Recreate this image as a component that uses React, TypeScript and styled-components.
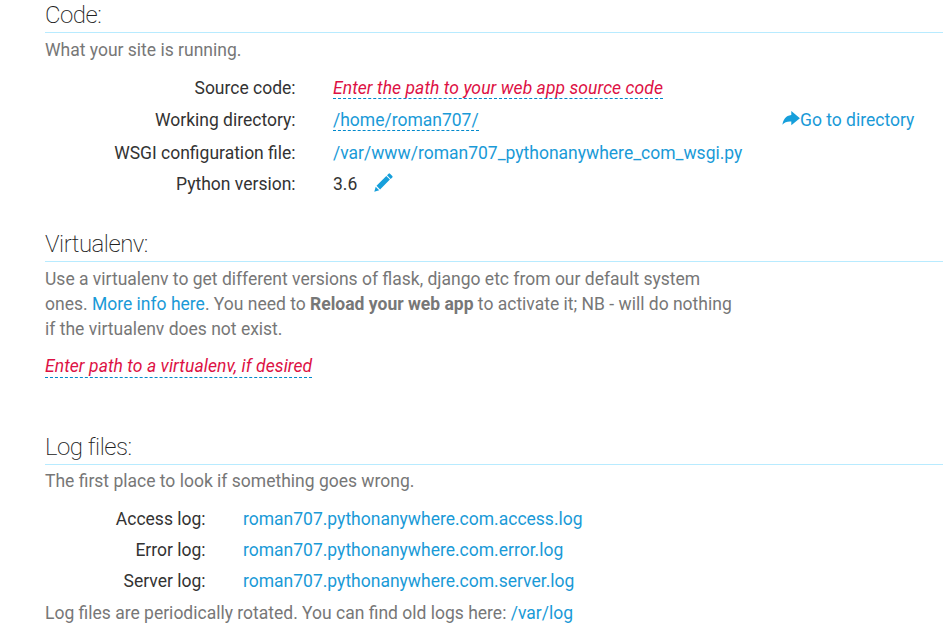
import React from "react";
import styled, { createGlobalStyle } from "styled-components";

const Global = createGlobalStyle`
  * { box-sizing: border-box; }
  body { margin: 0; background: #fff; overflow: hidden; }
`;

const Page = styled.main`
  height: 644px;
  overflow: hidden;
  padding-left: 45px;
  font-family: Roboto, sans-serif;
  font-size: 17.5px;
  line-height: 25px;
  color: #777;
`;

const Section = styled.section<{ $height: number }>`
  height: ${(p) => p.$height}px;
  margin-right: 3px;
`;

const Heading = styled.h2<{ $height: number }>`
  display: flex;
  align-items: flex-end;
  height: ${(p) => p.$height}px;
  margin: 0;
  padding-bottom: 3px;
  border-bottom: 1px solid #b8ebff;
  font-size: 24px;
  line-height: 28px;
  font-weight: 200;
  letter-spacing: -0.5px;
  color: #222;
`;

const Text = styled.p<{ $top?: number }>`
  margin: ${(p) => p.$top ?? 0}px 0 0;
  white-space: nowrap;
`;

const Row = styled.div<{ $label: number; $height: number }>`
  display: grid;
  grid-template-columns: ${(p) => p.$label}px 449px auto;
  column-gap: 37.4px;
  justify-content: start;
  height: ${(p) => p.$height}px;
  white-space: nowrap;
`;

const Rows = styled.div`
  padding-top: 13px;
`;

const Label = styled.span`
  text-align: right;
  color: #333;
`;

const Value = styled.span`
  color: #333;
`;

const Link = styled.a`
  color: #1a9ad7;
  text-decoration: none;
`;

const Editable = styled(Link)<{ $empty?: boolean; $line?: number }>`
  display: inline-block;
  line-height: ${(p) => p.$line ?? 19}px;
  border-bottom: 1px dashed #0088cc;
  ${(p) => p.$empty && "color: #dd1144; font-style: italic; letter-spacing: 0.07px;"}
`;

const Directory = styled(Link)`
  margin-left: -37.4px;
`;

const ArrowIcon = styled.svg`
  display: inline-block;
  vertical-align: -1px;
`;

const Arrow = () => (
  <ArrowIcon width="18" height="16" viewBox="0 0 18 16" fill="#169fdb">
    <path d="M9.300 0L17.900 7.200L9.300 14.200V10.600C5 10.300 2.700 11.500 0.400 13.800C1.100 8.700 3.700 4.500 9.300 3.900Z" />
  </ArrowIcon>
);

const Pencil = () => (
  <svg width="19" height="19" viewBox="0 0 19 19" fill="#169fdb">
    <path d="M0.300 18.700L1.700 13.700L5.200 17.200ZM2.500 12.700L12.300 3L15.900 6.600L6.100 16.400ZM13 2.300L14.600.700Q15.300 0 16 .700L18.300 3Q19 3.700 18.300 4.400L16.700 6Z" />
  </svg>
);

const EditIcon = styled.span`
  display: inline-flex;
  margin-left: 17px;
  vertical-align: -2px;
`;

const logs = ["Access", "Error", "Server"];

export default function App() {
  return (
    <>
      <Global />
      <Page>
        <Section $height={228}>
          <Heading $height={33}>Code:</Heading>
          <Text $top={5}>What your site is running.</Text>
          <Rows>
            <Row $label={250.6} $height={32}>
              <Label>Source code:</Label>
              <Value><Editable $empty>Enter the path to your web app source code</Editable></Value>
            </Row>
            <Row $label={250.6} $height={33}>
              <Label>Working directory:</Label>
              <Value><Editable>/home/roman707/</Editable></Value>
              <Directory><Arrow />Go to directory</Directory>
            </Row>
            <Row $label={250.6} $height={31}>
              <Label>WSGI configuration file:</Label>
              <Value><Link>/var/www/roman707_pythonanywhere_com_wsgi.py</Link></Value>
            </Row>
            <Row $label={250.6} $height={31}>
              <Label>Python version:</Label>
              <Value>3.6<EditIcon><Pencil /></EditIcon></Value>
            </Row>
          </Rows>
        </Section>
        <Section $height={203}>
          <Heading $height={34}>Virtualenv:</Heading>
          <Text $top={5}>
            Use a virtualenv to get different versions of flask, django etc from our default system<br />
            ones. <Link>More info here</Link>. You need to <b>Reload your web app</b> to activate it; NB - will do nothing<br />
            if the virtualenv does not exist.
          </Text>
          <Text $top={12}><Editable $empty $line={22}>Enter path to a virtualenv, if desired</Editable></Text>
        </Section>
        <Section $height={213}>
          <Heading $height={34}>Log files:</Heading>
          <Text $top={4}>The first place to look if something goes wrong.</Text>
          <Rows>
            {logs.map((name) => (
              <Row key={name} $label={160.6} $height={31}>
                <Label>{name} log:</Label>
                <Value><Link>roman707.pythonanywhere.com.{name.toLowerCase()}.log</Link></Value>
              </Row>
            ))}
          </Rows>
          <Text $top={1}>Log files are periodically rotated. You can find old logs here: <Link>/var/log</Link></Text>
        </Section>
      </Page>
    </>
  );
}
